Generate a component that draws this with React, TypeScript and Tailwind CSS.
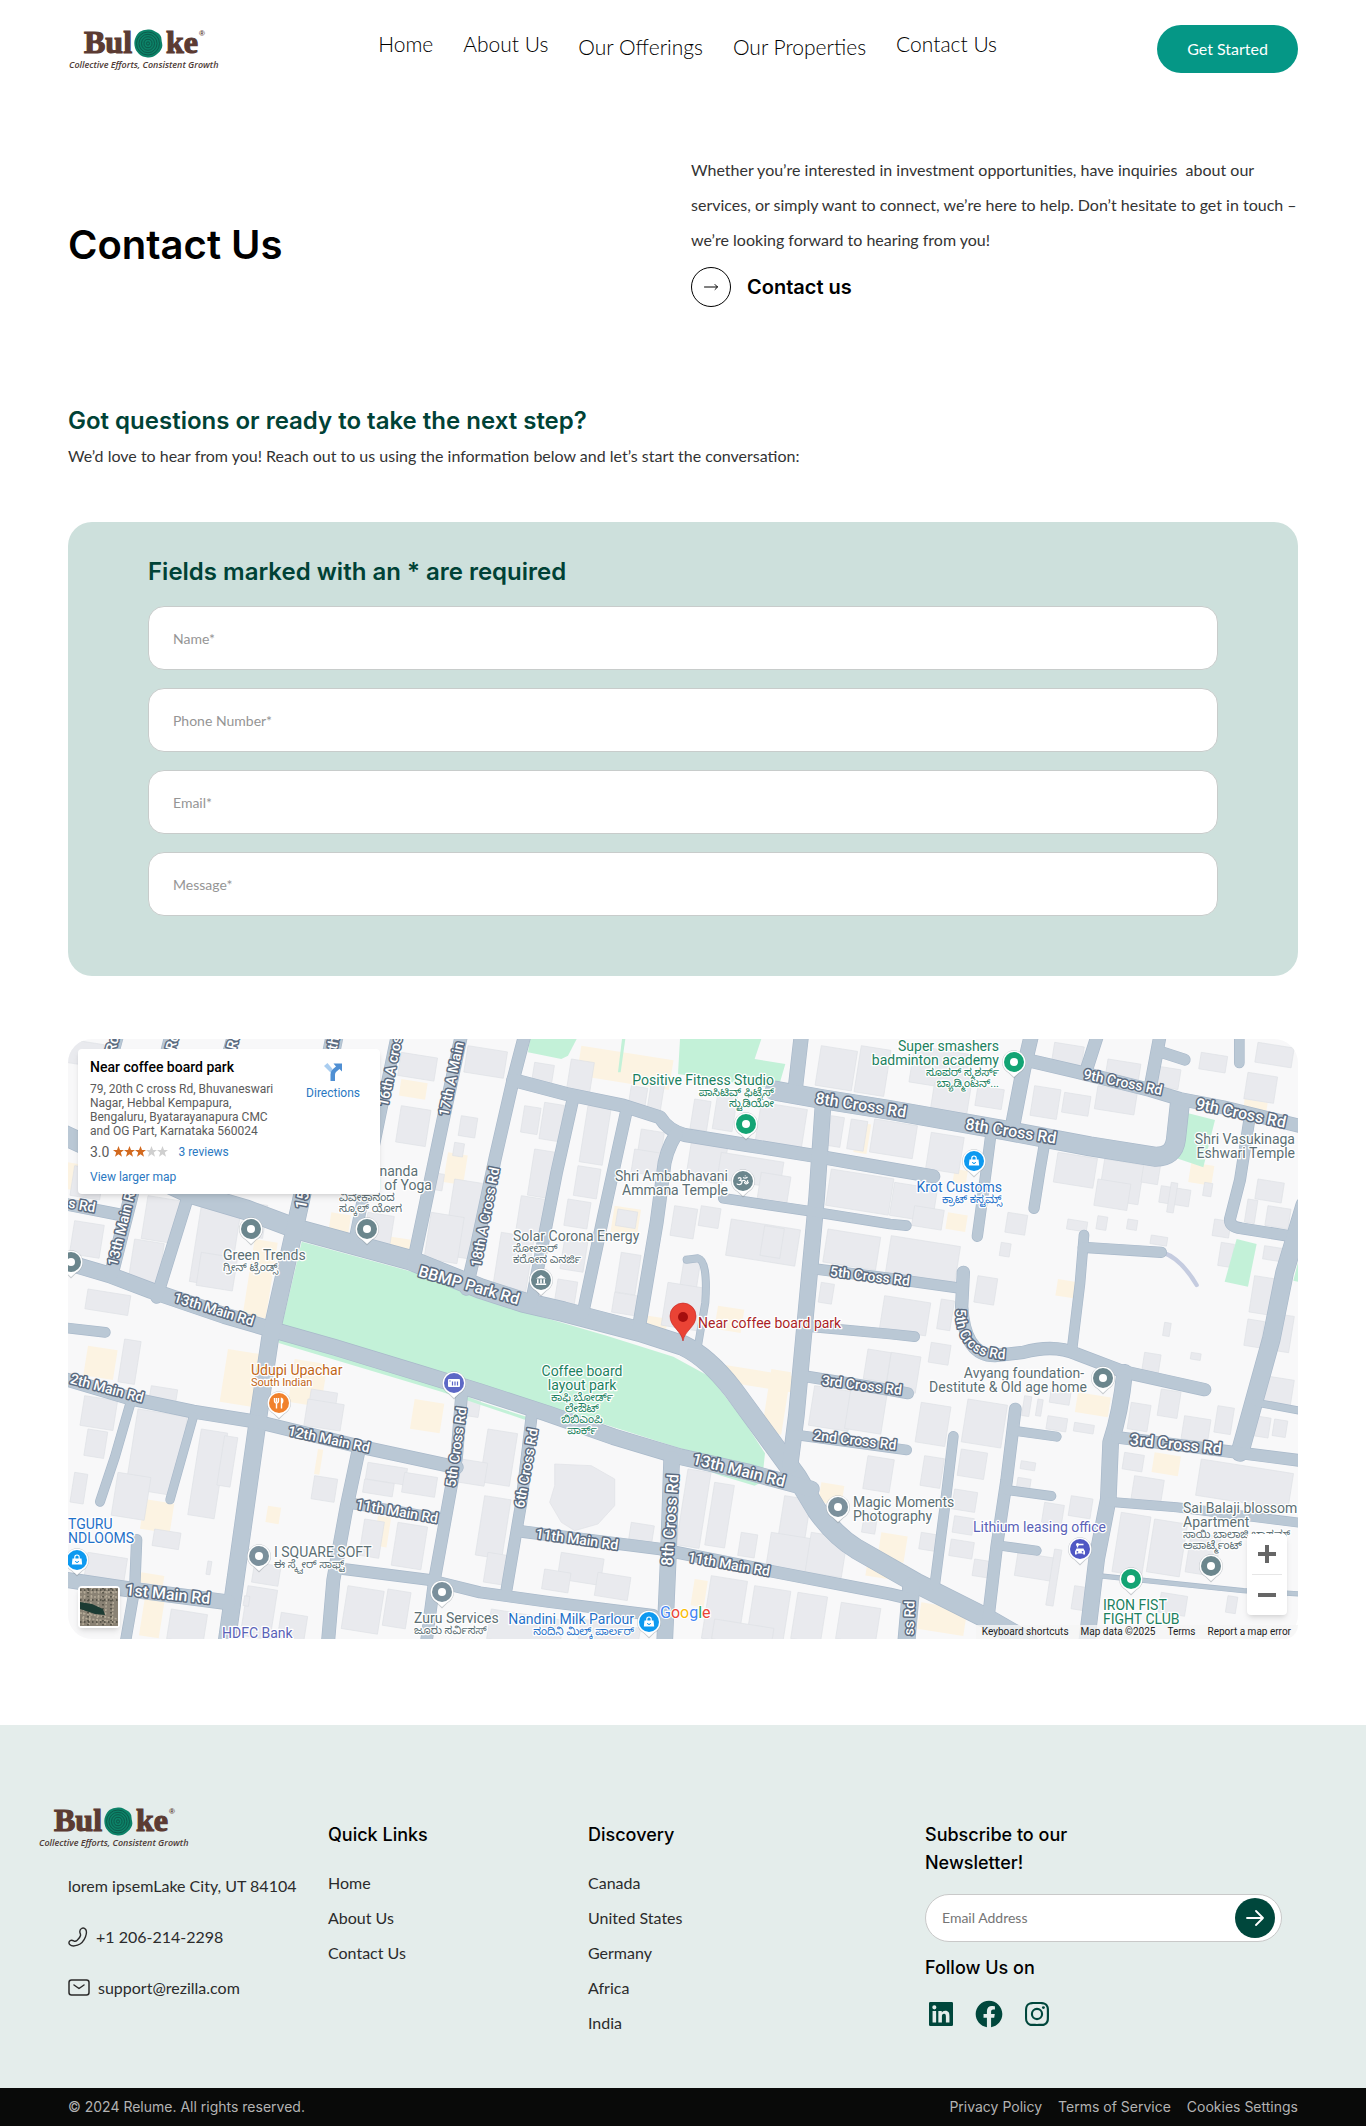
import { BiLogoFacebookCircle, BiLogoInstagram, BiLogoLinkedinSquare } from "react-icons/bi";

const navItems = [
  { label: "Home", menu: false },
  { label: "About Us", menu: false },
  { label: "Our Offerings", menu: true },
  { label: "Our Properties", menu: true },
  { label: "Contact Us", menu: false },
];

const fields = [
  { id: "name", label: "Name*", type: "text" },
  { id: "phone", label: "Phone Number*", type: "tel" },
  { id: "email", label: "Email*", type: "email" },
  { id: "message", label: "Message*", type: "text" },
];

const quickLinks = ["Home", "About Us", "Contact Us"];
const discovery = ["Canada", "United States", "Germany", "Africa", "India"];
const legal = ["Privacy Policy", "Terms of Service", "Cookies Settings"];

function Logo() {
  return (
    <svg className="overflow-visible" width="150" height="44" viewBox="0 0 150 44" role="img" aria-label="Buloke">
      <g fill="#5b3b33" stroke="#5b3b33" fontFamily="'Liberation Serif', serif" fontWeight="700" fontSize="32">
        <text x="16" y="26" strokeWidth="1.200">Bul</text>
        <text x="98" y="26" strokeWidth="1.200">ke</text>
      </g>
      <path d="M80 2.500c4-.5 6 1.500 9 3s4.500 4 4.500 7 1.500 5 .5 8-3 5-5.500 7-5.500 3.500-9 3-6-1-8.500-3.500-4-5-4.500-8.500 0-6 1.500-9 3-4.500 5.500-5.500 4-1.300 6.500-1.500z" fill="#0c8268" />
      <g fill="none" stroke="#0b4a3d" strokeWidth=".7">
        <ellipse cx="80" cy="16.500" rx="11.500" ry="11.500" />
        <ellipse cx="80" cy="16.500" rx="9" ry="9.200" />
        <ellipse cx="80" cy="16.500" rx="6.500" ry="6.800" />
        <ellipse cx="80" cy="16.500" rx="4" ry="4.200" />
        <ellipse cx="80" cy="16.500" rx="1.500" ry="1.700" />
      </g>
      <text x="131" y="9" fill="#5b3b33" fontFamily="'Liberation Sans', sans-serif" fontWeight="700" fontSize="8">®</text>
      <text x="1" y="41" fill="#4d3a36" fontFamily="'Open Sans', sans-serif" fontStyle="italic" fontWeight="600" fontSize="9">
        Collective Efforts, Consistent Growth
      </text>
    </svg>
  );
}

// Road centre lines, three units to one map pixel
const roads: { w: number; d: string }[] = [
  { w: 62, d: "M-30 280L366 463L536 513L696 573L1026 663L1236 748L1366 790L1486 818L1716 878L1846 920Q1920 955 1996 1053L2186 1313L2246 1413Q2300 1490 2366 1530L2546 1633L2746 1733L2880 1810" },
  { w: 50, d: "M-10 668L126 708L250 755L470 830L606 870L800 925L1056 1003L1236 1058L1436 1123L1636 1193L1836 1253L2036 1298L2230 1350" },
  { w: 54, d: "M800 -10L700 480L606 900L570 1140L476 1810" },
  { w: 44, d: "M311 -10L130 705" },
  { w: 38, d: "M496 -10L370 440L266 775" },
  { w: 36, d: "M150 -10L60 320" },
  { w: 36, d: "M986 -10L860 600" },
  { w: 38, d: "M-10 495L160 528" },
  { w: 40, d: "M1180 -10L1126 240L1036 670" },
  { w: 40, d: "M1370 -10L1336 120L1281 360L1226 620L1195 750" },
  { w: 42, d: "M1336 123L1496 165L1666 200L1776 235Q1800 275 1850 288L2036 318L2236 350L2466 390L2596 412" },
  { w: 38, d: "M1516 175L1466 400L1390 790" },
  { w: 38, d: "M1676 213L1606 533L1544 825" },
  { w: 42, d: "M1826 283Q1790 340 1786 400L1766 550L1712 870" },
  { w: 46, d: "M2200 -10L2180 165" },
  { w: 60, d: "M2120 155L2260 180L2466 213L2816 275L3066 322L3260 353Q3318 355 3324 300L3336 190" },
  { w: 50, d: "M2266 185L2246 475L2206 903L2185 1130L2166 1280" },
  { w: 32, d: "M1966 478L2216 515L2466 555L2515 560" },
  { w: 34, d: "M2240 690L2466 718L2680 748" },
  { w: 32, d: "M2216 862L2466 885L2540 893" },
  { w: 24, d: "M1856 662L1890 658Q1920 665 1912 790L1890 920" },
  { w: 46, d: "M2890 -10L2866 93L2832 270" },
  { w: 40, d: "M3088 -10L3056 90" },
  { w: 42, d: "M2876 63L3026 98L3246 153L3336 180L3466 205L3700 262" },
  { w: 40, d: "M3276 -10L3246 150" },
  { w: 36, d: "M3276 38L3350 62" },
  { w: 32, d: "M3514 -10L3514 72" },
  { w: 34, d: "M2770 275L2751 423L2728 592" },
  { w: 34, d: "M2932 300L2916 393L2898 508" },
  { w: 36, d: "M3546 230L3516 423L3486 540Q3484 564 3520 568L3670 592" },
  { w: 56, d: "M3710 500L3650 700L3610 900L3560 1080L3516 1240" },
  { w: 32, d: "M3048 588L3036 733L3011 940" },
  { w: 34, d: "M3046 625L3280 640" },
  { w: 40, d: "M2686 700L2681 803Q2690 950 2780 950L2866 940Q2960 915 3026 945L3166 998L3410 1052" },
  { w: 50, d: "M3170 1000Q3158 1120 3128 1210L3121 1380L3086 1560L3056 1810" },
  { w: 38, d: "M3146 1195L3526 1243L3700 1265" },
  { w: 24, d: "M3560 1090L3700 1116" },
  { w: 30, d: "M3121 1388L3326 1405L3700 1452" },
  { w: 16, d: "M3090 1610L3526 1655L3700 1665" },
  { w: 38, d: "M2842 1110L2816 1323L2786 1523L2761 1735" },
  { w: 30, d: "M2836 1175L2966 1193" },
  { w: 30, d: "M2816 1353L2950 1371" },
  { w: 30, d: "M2796 1520L2906 1535" },
  { w: 32, d: "M2656 1192L2631 1400L2600 1640" },
  { w: 36, d: "M2200 1010L2466 1053L2520 1063" },
  { w: 32, d: "M2186 1188L2516 1233" },
  { w: 54, d: "M2530 1640L2515 1810" },
  { w: 38, d: "M1366 1478L1776 1530L2116 1598L2466 1665L2530 1680" },
  { w: 50, d: "M1811 1260L1801 1553L1790 1810" },
  { w: 36, d: "M1391 1130L1360 1390L1316 1650" },
  { w: 36, d: "M826 1590L1086 1623L1236 1660L1436 1688L1756 1728" },
  { w: 38, d: "M1181 1063L1166 1253L1100 1620L1075 1810" },
  { w: 42, d: "M872 1233L836 1403L796 1623L780 1810" },
  { w: 34, d: "M850 1393L1120 1440" },
  { w: 42, d: "M-10 1020L186 1078L376 1118L576 1150L876 1223L1166 1285" },
  { w: 30, d: "M190 1083L141 1253L96 1388" },
  { w: 28, d: "M376 1133L306 1382" },
  { w: 48, d: "M-10 1622L176 1650L480 1690" },
  { w: 34, d: "M206 1502L200 1650L172 1810" },
  { w: 32, d: "M-10 866L112 880" },
];

// x, y, width, height; every block leans with the street grid
const buildings: number[][] = [
  [0, 0, 110, 70], [20, 380, 90, 90], [20, 545, 90, 100], [240, 470, 110, 130], [200, 600, 90, 130], [400, 500, 120, 230],
  [400, 640, 110, 100], [540, 490, 60, 100], [60, 750, 130, 60], [900, 520, 80, 90], [1000, 40, 110, 70], [1000, 200, 90, 110],
  [1090, 400, 40, 50], [1200, 20, 120, 80], [1180, 230, 50, 60], [1160, 310, 30, 40], [1160, 420, 90, 230], [1090, 520, 100, 140],
  [1400, 70, 60, 70], [1510, 60, 70, 90], [1430, 190, 60, 110], [1400, 330, 70, 140], [1360, 470, 90, 130], [1300, 580, 100, 180],
  [1370, 200, 50, 80], [1560, 200, 70, 170], [1530, 380, 70, 90], [1500, 480, 70, 80], [1490, 600, 70, 90], [1470, 720, 60, 70],
  [1720, 270, 70, 90], [1700, 330, 90, 70], [1650, 510, 60, 50], [1660, 640, 60, 120], [1640, 760, 70, 60], [1690, 140, 50, 70],
  [1750, 130, 40, 80], [1880, 180, 50, 90], [1950, 160, 60, 110], [2080, 190, 140, 120], [1870, 310, 110, 110], [1960, 340, 190, 80],
  [2080, 400, 90, 80], [1820, 500, 70, 90], [1900, 500, 60, 60], [1990, 540, 210, 110], [1850, 650, 50, 160], [1800, 730, 110, 130],
  [2090, 560, 60, 90], [2260, 20, 110, 120], [2380, 20, 90, 140], [2540, 20, 180, 110], [2600, 130, 110, 90], [2290, 230, 40, 90],
  [2350, 240, 50, 90], [2420, 240, 130, 100], [2590, 280, 100, 110], [2290, 390, 190, 110], [2480, 430, 130, 100], [2540, 500, 90, 60],
  [2280, 570, 160, 100], [2470, 590, 210, 120], [2260, 730, 40, 60], [2450, 770, 140, 100], [2620, 780, 40, 90], [2730, 140, 80, 60],
  [2900, 140, 80, 90], [2990, 160, 80, 60], [3090, 140, 120, 70], [2960, 10, 90, 60], [3120, 60, 100, 60], [3260, 80, 80, 60],
  [3400, 40, 80, 50], [3540, 100, 90, 80], [3570, 10, 110, 60], [2970, 340, 120, 90], [3110, 360, 120, 120], [3090, 420, 100, 80],
  [3230, 360, 50, 70], [3280, 440, 90, 50], [3310, 430, 20, 90], [3410, 430, 25, 40], [2820, 520, 60, 60], [3000, 540, 60, 30],
  [3090, 530, 30, 40], [3180, 540, 30, 30], [3250, 588, 50, 26], [2730, 710, 60, 80], [2800, 610, 30, 40], [3570, 420, 80, 60],
  [3540, 480, 30, 70], [3600, 500, 70, 60], [3440, 540, 50, 50], [3460, 610, 40, 70], [3590, 620, 70, 40], [3560, 710, 80, 110],
  [3540, 840, 50, 80], [3600, 820, 80, 110], [3290, 850, 20, 40], [3230, 940, 50, 60], [3370, 940, 30, 20], [3280, 1050, 60, 80],
  [3190, 1090, 60, 80], [3350, 1130, 80, 70], [3450, 1100, 50, 80], [3590, 1010, 90, 80], [3560, 1130, 50, 60], [3620, 1140, 40, 50],
  [3170, 1240, 60, 50], [3200, 1310, 90, 70], [3400, 1260, 280, 110], [3160, 1420, 90, 180], [3260, 1440, 100, 160], [3370, 1480, 90, 120],
  [3280, 1660, 80, 60], [3480, 1670, 30, 50], [2590, 910, 60, 60], [2470, 940, 90, 110], [2560, 1090, 90, 120], [2700, 1080, 120, 130],
  [2680, 1230, 80, 80], [2570, 1250, 60, 90], [2660, 1350, 70, 60], [2660, 1430, 60, 50], [2650, 1500, 70, 50], [2560, 1480, 60, 50],
  [2720, 1560, 60, 50], [2870, 1070, 22, 60], [2910, 1080, 16, 50], [2940, 1130, 60, 40], [3020, 1150, 60, 26], [2860, 1265, 44, 24],
  [2850, 1315, 40, 34], [3010, 1370, 66, 60], [2930, 1390, 60, 60], [2850, 1540, 110, 70], [2960, 1530, 22, 170], [3020, 1640, 40, 70],
  [2950, 1050, 60, 40], [2240, 1040, 120, 120], [2350, 1040, 110, 130], [2400, 930, 70, 90], [2400, 1250, 80, 100], [2390, 1420, 40, 60],
  [1860, 1290, 70, 230], [1940, 1330, 60, 190], [2020, 1480, 50, 70], [2150, 1370, 80, 130], [2110, 1480, 130, 120], [2230, 1480, 110, 120],
  [1690, 1450, 70, 50], [1480, 1540, 130, 80], [1430, 1590, 80, 60], [1590, 1600, 100, 70], [1260, 1170, 90, 160],
  [1250, 1370, 80, 180], [1260, 1540, 60, 90], [1270, 1710, 220, 90], [1540, 1740, 180, 60], [1930, 1610, 110, 190], [2060, 1640, 110, 160],
  [2190, 1660, 90, 140], [2320, 1690, 120, 110], [1940, 1740, 180, 60], [170, 900, 50, 130], [50, 1070, 100, 90], [60, 1170, 60, 80],
  [210, 1110, 150, 240], [150, 1300, 100, 130], [400, 1170, 80, 260], [470, 1190, 40, 150], [250, 1040, 80, 40], [730, 1050, 80, 80],
  [720, 1080, 110, 80], [900, 1270, 120, 50], [890, 1320, 90, 40], [1010, 1300, 100, 60], [740, 1310, 70, 70], [890, 1440, 60, 110],
  [990, 1450, 90, 130], [840, 1640, 110, 130], [960, 1650, 70, 110], [260, 1470, 80, 50], [60, 1540, 120, 70], [420, 1566, 12, 40],
  [560, 1570, 80, 60], [540, 1640, 90, 150], [310, 1710, 110, 90], [640, 1720, 80, 80], [530, 1670, 16, 30], [20, 1300, 40, 90],
  [1200, 1070, 40, 60], [1180, 1260, 80, 70],
];

const shops: number[][] = [
  [560, 600, 70, 230], [790, 520, 60, 70], [950, 590, 80, 60], [1000, 120, 80, 50], [1140, 340, 60, 90], [0, 370, 30, 80],
  [1540, 20, 280, 90], [1640, 500, 80, 80], [2370, 250, 40, 90], [2640, 520, 60, 50], [2660, 390, 40, 50], [3530, 180, 70, 40],
  [3370, 370, 70, 60], [2970, 720, 60, 50], [480, 930, 120, 160], [680, 960, 100, 130], [1040, 1080, 90, 90], [60, 920, 90, 90],
  [600, 1400, 40, 50], [750, 1230, 16, 76], [230, 1380, 90, 90], [220, 1600, 70, 30], [930, 1430, 40, 90], [230, 1680, 60, 110],
  [1920, 970, 260, 50], [2110, 990, 60, 190], [2260, 1330, 70, 60], [2560, 1690, 140, 80], [3260, 1240, 80, 60], [2400, 1560, 120, 50],
  [1740, 830, 60, 50], [1950, 800, 80, 70], [1880, 1620, 40, 80], [2440, 1480, 80, 80], [3030, 1060, 100, 60],
];

type RoadLabel = [text: string, x: number, y: number, angle: number, size: number];
const roadLabels: RoadLabel[] = [
  ["8th Cross Rd", 793, 66, 9, 16],
  ["8th Cross Rd", 943, 92, 9, 16],
  ["9th Cross Rd", 1055, 43, 12, 14],
  ["9th Cross Rd", 1173, 74, 12, 16],
  ["5th Cross Rd", 802, 237, 7, 14],
  ["3rd Cross Rd", 794, 346, 7, 14],
  ["2nd Cross Rd", 787, 401, 7, 14],
  ["3rd Cross Rd", 1108, 405, 6, 16],
  ["13th Main Rd", 671, 431, 14, 16],
  ["13th Main Rd", 146, 270, 17, 14],
  ["12th Main Rd", 261, 400, 12, 14],
  ["2th Main Rd", 39, 349, 15, 14],
  ["1st Main Rd", 100, 555, 6, 16],
  ["11th Main Rd", 329, 472, 10, 14],
  ["11th Main Rd", 509, 500, 8, 14],
  ["11th Main Rd", 661, 525, 10, 14],
  ["BBMP Park Rd", 401, 246, 16, 16],
  ["8th Cross Rd", 602, 481, -86, 16],
  ["6th Cross Rd", 458, 429, -80, 14],
  ["5th Cross Rd", 388, 408, -82, 14],
  ["18th A Cross Rd", 417, 178, -79, 14],
  ["17th A Main", 383, 40, -78, 14],
  ["16th A cros", 322, 32, -78, 14],
  ["15", 234, 161, -79, 16],
  ["13th Main R", 53, 190, -76, 14],
  ["s Rd", 14, 166, 10, 14],
  ["ss Rd", 841, 579, -88, 14],
  ["Rd", 44, 5, -75, 14],
  ["Rd", 104, 3, -75, 14],
  ["Rd", 165, 2, -75, 14],
  ["th", 265, 4, -78, 14],
];

type Place = {
  x: number;
  y: number;
  color: string;
  anchor?: "start" | "middle" | "end";
  lines: string[];
  local?: string[];
};

const slate = "#5c6f74";
const green = "#1b8160";
const blue = "#1f71c9";
const places: Place[] = [
  { x: 155, y: 221, color: slate, lines: ["Green Trends"], local: ["ಗ್ರೀನ್ ಟ್ರೆಂಡ್ಸ್"] },
  { x: 350, y: 137, color: slate, anchor: "end", lines: ["nanda"] },
  { x: 364, y: 151, color: slate, anchor: "end", lines: ["l of Yoga"] },
  { x: 271, y: 150, color: slate, lines: [], local: ["ವಿವೇಕಾನಂದ", "ಸ್ಕೂಲ್ ಯೋಗ"] },
  { x: 706, y: 46, color: green, anchor: "end", lines: ["Positive Fitness Studio"], local: ["ಪಾಸಿಟಿವ್ ಫಿಟ್ನೆಸ್", "ಸ್ಟುಡಿಯೋ"] },
  { x: 660, y: 142, color: slate, anchor: "end", lines: ["Shri Ambabhavani", "Ammana Temple"] },
  { x: 445, y: 202, color: slate, lines: ["Solar Corona Energy"], local: ["ಸೋಲಾರ್", "ಕರೋನ ಎನರ್ಜಿ"] },
  { x: 630, y: 289, color: "#ab1f27", lines: ["Near coffee board park"] },
  { x: 931, y: 12, color: green, anchor: "end", lines: ["Super smashers", "badminton academy"], local: ["ಸೂಪರ್ ಸ್ಮಶರ್ಸ್", "ಬ್ಯಾಡ್ಮಿಂಟನ್..."] },
  { x: 934, y: 153, color: blue, anchor: "end", lines: ["Krot Customs"], local: ["ಕ್ರಾಟ್ ಕಸ್ಟಮ್ಸ್"] },
  { x: 1227, y: 105, color: slate, anchor: "end", lines: ["Shri Vasukinaga", "Eshwari Temple"] },
  { x: 183, y: 336, color: "#bf6516", lines: ["Udupi Upachar"], local: ["South Indian"] },
  { x: 0, y: 490, color: blue, lines: ["TGURU", "NDLOOMS"] },
  { x: 206, y: 518, color: slate, lines: ["I SQUARE SOFT"], local: ["ಈ ಸ್ಕ್ವೇರ್ ಸಾಫ್ಟ್"] },
  { x: 346, y: 584, color: slate, lines: ["Zuru Services"], local: ["ಜೂರು ಸರ್ವಿಸಸ್"] },
  { x: 154, y: 599, color: "#5a62b8", lines: ["HDFC Bank"] },
  { x: 514, y: 337, color: green, anchor: "middle", lines: ["Coffee board", "layout park"], local: ["ಕಾಫಿ ಬೋರ್ಡ್", "ಲೇಔಟ್", "ಬಿಬಿಎಂಪಿ", "ಪಾರ್ಕ್"] },
  { x: 566, y: 585, color: blue, anchor: "end", lines: ["Nandini Milk Parlour"], local: ["ನಂದಿನಿ ಮಿಲ್ಕ್ ಪಾರ್ಲರ್"] },
  { x: 785, y: 468, color: slate, lines: ["Magic Moments", "Photography"] },
  { x: 1016, y: 339, color: slate, anchor: "end", lines: ["Avyang foundation-"] },
  { x: 1019, y: 353, color: slate, anchor: "end", lines: ["Destitute & Old age home"] },
  { x: 905, y: 493, color: "#5a62b8", lines: ["Lithium leasing office"] },
  { x: 1035, y: 571, color: green, lines: ["IRON FIST", "FIGHT CLUB"] },
  { x: 1115, y: 474, color: slate, lines: ["Sai Balaji blossom", "Apartment"], local: ["ಸಾಯಿ ಬಾಲಾಜಿ ಬ್ಲಾಸಮ್", "ಅಪಾರ್ಟ್ಮೆಂಟ್"] },
];

type PinKind = "dot" | "bag" | "food" | "museum" | "atm" | "car" | "om";
const pins: { x: number; y: number; fill: string; kind: PinKind }[] = [
  { x: 183, y: 190, fill: "#6b868d", kind: "dot" },
  { x: 299, y: 190, fill: "#6b868d", kind: "dot" },
  { x: 3, y: 223, fill: "#6b868d", kind: "dot" },
  { x: 678, y: 85, fill: "#13a474", kind: "dot" },
  { x: 675, y: 142, fill: "#6b868d", kind: "om" },
  { x: 473, y: 241, fill: "#6b868d", kind: "museum" },
  { x: 946, y: 23, fill: "#13a474", kind: "dot" },
  { x: 906, y: 122, fill: "#0d99f0", kind: "bag" },
  { x: 211, y: 364, fill: "#f1812c", kind: "food" },
  { x: 386, y: 344, fill: "#5d68c6", kind: "atm" },
  { x: 9, y: 521, fill: "#0d99f0", kind: "bag" },
  { x: 191, y: 517, fill: "#7b909c", kind: "dot" },
  { x: 374, y: 553, fill: "#7b909c", kind: "dot" },
  { x: 581, y: 583, fill: "#0d99f0", kind: "bag" },
  { x: 770, y: 468, fill: "#7b909c", kind: "dot" },
  { x: 1035, y: 339, fill: "#6b868d", kind: "dot" },
  { x: 1012, y: 510, fill: "#4f57c4", kind: "car" },
  { x: 1063, y: 540, fill: "#13a474", kind: "dot" },
  { x: 1143, y: 527, fill: "#6b868d", kind: "dot" },
];

function PinGlyph({ kind }: { kind: PinKind }) {
  switch (kind) {
    case "bag":
      return (
        <>
          <path d="M-4.500-1.500h9l.7 6h-10.400z" fill="#fff" />
          <path d="M-2.200-1v-1.800a2.200 2.200 0 0 1 4.400 0v1.800" fill="none" stroke="#fff" strokeWidth="1.200" />
          <path d="M-1.500 1a1.500 1.500 0 0 0 3 0" fill="none" stroke="#0d99f0" />
        </>
      );
    case "food":
      return (
        <path d="M-2.500 5.500v-6M-4.500-5v3a2 2 0 0 0 4 0v-3M-2.500-5v4M2.500 5.500v-10c2 .5 1.500 4.500 0 5" fill="none" stroke="#fff" strokeWidth="1.400" />
      );
    case "museum":
      return <path d="M-5-1.500l5-3.500 5 3.500zM-4-.8h1.600v4h-1.600zM-.8-.8h1.600v4h-1.600zM2.400-.8h1.600v4h-1.600zM-5.200 3.500h10.400v1.500h-10.400z" fill="#fff" />;
    case "atm":
      return (
        <>
          <rect x="-6" y="-4" width="12" height="8" rx="1" fill="#fff" />
          <path d="M-4-1.500v-1M-1.500 2.500v-4M1 2.500v-4M3.500 2.500v-4" stroke="#5d68c6" strokeWidth="1.200" />
        </>
      );
    case "car":
      return (
        <>
          <path d="M-5 5.500v-3l1.500-3h7l1.500 3v3h-1.700v-1h-6.600v1z" fill="#fff" />
          <circle cx="-2.600" cy="2.800" r=".9" fill="#4f57c4" />
          <circle cx="2.600" cy="2.800" r=".9" fill="#4f57c4" />
          <path d="M-2.500-4.500v3M-2.500-4.500h6" stroke="#fff" strokeWidth="1.300" />
          <circle cx="-2.500" cy="-4.500" r="1.500" fill="#fff" />
        </>
      );
    case "om":
      return (
        <path d="M-5-2.500c2-2 4.500 0 2 2 3.500 0 2 4.500-1.500 4-1 0-1.500-.5-1.500-1M-1.500.5c2-1.500 3-1.500 4 0s3 .5 2-1.500M1.500 1c0 2.500 3.500 2.500 4 0M0-3.500c1.500 1 3 1 4.500-.5M2.300-5.500v.8" fill="none" stroke="#fff" strokeWidth="1.200" />
      );
    default:
      return <circle r="4" fill="#fff" />;
  }
}

function MapCanvas() {
  return (
    <svg
      className="block h-full w-full"
      viewBox="0 0 1230 600"
      preserveAspectRatio="xMidYMid slice"
      fontFamily="Roboto, 'Noto Sans', 'Noto Sans Kannada', sans-serif"
    >
      <rect width="1230" height="600" fill="#f8f8f9" />
      <g transform="scale(.33333)">
        <g fill="#fcf3e2">
          {shops.map(([x, y, w, h]) => (
            <rect key={`${x}-${y}`} x={x} y={y} width={w} height={h} transform={`rotate(9 ${x} ${y})`} />
          ))}
        </g>
        <g fill="#e9eaee" stroke="#dfe1e6" strokeWidth="2">
          {buildings.map(([x, y, w, h]) => (
            <rect key={`${x}-${y}`} x={x} y={y} width={w} height={h} transform={`rotate(9 ${x} ${y})`} />
          ))}
          <path d="M1460 1275L1570 1280L1640 1320V1400L1590 1455L1520 1475L1480 1450L1445 1390L1460 1340Z" />
        </g>
        <g fill="#c3f1d8">
          <path d="M701 608L1086 713L1236 780L1616 890L1816 953L1926 1013L2026 1143L2091 1243L2086 1290L1836 1228L1616 1158L1236 1043L1076 995L826 930L642 858Z" />
          <path d="M1386 0H1526L1500 50L1480 60L1380 40Z" />
          <path d="M1836 0H2080L2060 60L2152 75L2130 150L1830 105Z" />
          <path d="M1662 0h10l-14 100h-8z" />
          <path d="M3361 223L3441 243L3406 385L3326 358Z" />
          <path d="M3506 600L3566 615L3540 743L3470 728Z" />
          <path d="M3690 670V728L3676 725Z" />
          <path d="M632 900L1140 1050L1240 1090L1380 1135L1370 1142L1120 1058L632 912Z" />
          <path d="M1860 1275L2080 1330L2060 1340L1960 1310Z" />
        </g>
        <path d="M3286 641Q3340 660 3386 738" fill="none" stroke="#c5cce0" strokeWidth="13" strokeLinecap="round" />
        <g fill="none" stroke="#a9b9ca" strokeLinejoin="round" strokeLinecap="round">
          {roads.map((r) => (
            <path key={r.d} d={r.d} strokeWidth={r.w} />
          ))}
        </g>
        <g fill="none" stroke="#bac8d5" strokeLinejoin="round" strokeLinecap="round">
          {roads.map((r) => (
            <path key={r.d} d={r.d} strokeWidth={r.w - 4} />
          ))}
        </g>
      </g>

      <g fill="#fff" stroke="#5b6b80" strokeWidth="3" strokeLinejoin="round" fontWeight="500" className="[paint-order:stroke]">
        {roadLabels.map(([text, x, y, angle, size]) => (
          <text
            key={`${x}-${y}`}
            x={x}
            y={y}
            fontSize={size}
            textAnchor="middle"
            dominantBaseline="central"
            transform={`rotate(${angle} ${x} ${y})`}
          >
            {text}
          </text>
        ))}
        <path id="bend" d="M888 270Q886 324 950 320" fill="none" stroke="none" />
        <text fontSize="14">
          <textPath href="#bend">5th Cross Rd</textPath>
        </text>
      </g>

      {pins.map((p) => (
        <g key={`${p.x}-${p.y}`} transform={`translate(${p.x} ${p.y})`}>
          <path d="M0 16.500L-5.500 11A12 12 0 1 1 5.500 11Z" fill="#8b959c" opacity=".45" />
          <path d="M0 15L-5 10.500A11.500 11.500 0 1 1 5 10.500Z" fill="#fff" />
          <circle r="10" fill={p.fill} />
          <PinGlyph kind={p.kind} />
        </g>
      ))}

      <path d="M615 302C613 291 602 288 602 277A13 13 0 0 1 628 277C628 288 617 291 615 302Z" fill="#ea4335" stroke="#c5221f" strokeWidth=".6" />
      <circle cx="615" cy="278" r="5" fill="#a50e0e" />

      {places.map((p) => (
        <g
          key={`${p.x}-${p.y}`}
          fill={p.color}
          stroke="#fff"
          strokeWidth="2.500"
          strokeLinejoin="round"
          textAnchor={p.anchor ?? "start"}
          className="[paint-order:stroke]"
        >
          {p.lines.map((line, i) => (
            <text key={line} x={p.x} y={p.y + i * 14} fontSize="14">
              {line}
            </text>
          ))}
          {p.local?.map((line, i) => (
            <text key={line} x={p.x} y={p.y + (p.lines.length - 1) * 14 + 11 * (i + 1) + (p.lines.length ? 0 : 15)} fontSize="11">
              {line}
            </text>
          ))}
        </g>
      ))}
    </svg>
  );
}

function PlaceCard() {
  return (
    <div className="absolute top-2.5 left-2.5 flex h-[145px] w-[302px] justify-between rounded-sm bg-white py-2 pr-5 pl-3 text-xs leading-[14px] text-[#5b5b5b] shadow-md">
      <div className="w-[190px]">
        <h3 className="text-sm leading-5 font-medium text-black">Near coffee board park</h3>
        <p className="mt-[5px]">
          79, 20th C cross Rd, Bhuvaneswari
          <br />
          Nagar, Hebbal Kempapura,
          <br />
          Bengaluru, Byatarayanapura CMC
          <br />
          and OG Part, Karnataka 560024
        </p>
        <div className="mt-1 flex items-center leading-5">
          <span className="mr-1 text-sm">3.0</span>
          <svg width="55" height="12" viewBox="0 0 55 12" role="img" aria-label="3 of 5 stars">
            {[0, 1, 2, 3, 4].map((i) => (
              <path
                key={i}
                d="M5.500 0l1.500 4h4l-3.200 2.500 1.200 4.200-3.500-2.500-3.500 2.500 1.200-4.200-3.200-2.500h4z"
                transform={`translate(${i * 11} 0)`}
                fill={i < 3 ? "#d2691e" : "#cfcfcf"}
              />
            ))}
          </svg>
          <a href="#reviews" className="ml-2.5 text-[#2a78c2]">3 reviews</a>
        </div>
        <a href="#larger-map" className="mt-2 block text-[#2a78c2]">View larger map</a>
      </div>
      <a href="#directions" className="flex flex-col items-center pt-1.5 text-[#2a78c2]">
        <svg width="18" height="18" viewBox="0 0 18 18" aria-hidden="true">
          <path d="M0 3L3.500 0L8.500 6L7 10Z" fill="#a9cdf0" />
          <path d="M6.500 18V11Q6.500 8 9 6L12 3.500L9.500 .5H18V8.500L15.500 6L12 9Q11 10 11 12V18Z" fill="#4f8fd3" />
        </svg>
        <span className="mt-[5px]">Directions</span>
      </a>
    </div>
  );
}

function LocationMap() {
  return (
    <section aria-label="Map" className="relative mt-[63px] h-[600px] font-['Roboto',sans-serif]">
      <div className="h-full overflow-hidden rounded-3xl">
        <MapCanvas />
      </div>
      <PlaceCard />

      <button type="button" aria-label="Show satellite imagery" className="absolute bottom-[11px] left-2.5 size-[42px] rounded-sm border-2 border-white shadow-md">
        <svg className="block size-full" viewBox="0 0 38 38" aria-hidden="true">
          <rect width="38" height="38" fill="#8a8274" />
          <path d="M0 4h38M0 9h38M2 30l34 4M0 25l38 6M5 0l-2 38M12 0l-3 38M19 0l-2 38M27 0l-2 38M34 0l-2 38" stroke="#b5ab98" strokeWidth="1.500" strokeDasharray="2 1.500" />
          <path d="M0 2h38M0 12h38M0 34h38M8 0v38M23 0v38M31 0v38" stroke="#4a483e" strokeWidth="1.500" strokeDasharray="1.500 2.500" />
          <path d="M0 14l12 2 11 5 2 6-10-1-15-5z" fill="#1c3b33" />
        </svg>
      </button>

      <p aria-label="Google" className="absolute bottom-3.5 left-[592px] flex text-base leading-6 [paint-order:stroke] [-webkit-text-stroke:2px_white]">
        <span className="text-[#4285f4]">G</span>
        <span className="text-[#ea4335]">o</span>
        <span className="text-[#fbbc04]">o</span>
        <span className="text-[#4285f4]">g</span>
        <span className="text-[#34a853]">l</span>
        <span className="text-[#ea4335]">e</span>
      </p>

      <div className="absolute right-[11px] bottom-6 flex w-10 flex-col items-center rounded-sm bg-white shadow-md">
        <button type="button" aria-label="Zoom in" className="flex h-10 w-full items-center justify-center">
          <svg width="18" height="18" viewBox="0 0 18 18" aria-hidden="true">
            <path d="M7 0h4v7h7v4h-7v7h-4v-7h-7v-4h7z" fill="#666" />
          </svg>
        </button>
        <span className="h-px w-[30px] bg-[#e6e6e6]" />
        <button type="button" aria-label="Zoom out" className="flex h-10 w-full items-center justify-center">
          <svg width="18" height="4" viewBox="0 0 18 4" aria-hidden="true">
            <path d="M0 0h18v4h-18z" fill="#666" />
          </svg>
        </button>
      </div>

      <div className="absolute right-0 bottom-0 flex gap-3 rounded-br-3xl bg-[#f5f5f5]/80 pr-[7px] pl-1.5 text-[10px] leading-[14px] text-[#222]">
        <button type="button">Keyboard shortcuts</button>
        <span>Map data ©2025</span>
        <a href="#map-terms">Terms</a>
        <a href="#map-error">Report a map error</a>
      </div>
    </section>
  );
}

function Header() {
  return (
    <header className="flex items-center justify-between px-17 py-[25px]">
      <a href="#home">
        <Logo />
      </a>
      <nav className="flex items-start gap-[30px] pb-2 font-['Lato',sans-serif] text-[21px] leading-6 font-light text-black">
        {navItems.map((item) => (
          <a key={item.label} href="#" className={item.menu ? "pt-[3px]" : ""}>
            {item.label}
          </a>
        ))}
      </nav>
      <button type="button" className="h-12 rounded-full bg-[#059786] px-[30px] text-white">
        Get Started
      </button>
    </header>
  );
}

function Footer() {
  return (
    <footer className="mt-[86px]">
      <div className="grid grid-cols-[260fr_260fr_337fr_373fr] bg-[#e4edeb] px-17 pt-24 pb-12 text-[#2b2b2b]">
        <div>
          <a href="#home" className="-mt-4 -ml-[30px] block w-[150px]">
            <Logo />
          </a>
          <p className="mt-[25px] leading-6">lorem ipsemLake City, UT 84104</p>
          <a href="tel:+12062142298" className="mt-[27px] flex items-center gap-2 leading-6">
            <svg width="20" height="20" viewBox="0 0 20 20" fill="none" stroke="#2b2b2b" strokeWidth="1.400" strokeLinejoin="round" aria-hidden="true">
              <path d="M13.500 1.500c1.200-.8 3-.6 4.200 1 1 1.500 1 4-.2 7.200-1.500 4-4.500 7.300-8 8.500-3 1-6.300.8-7.800-.7-1.200-1.200-.9-2.700.3-3.700 1.300-1.100 2.400-.7 3.700.1 1.200.7 2.100.7 3.500-.6 1.800-1.700 3-3.300 3.300-4.800.3-1.200-.4-1.900-.6-3.200-.3-1.700.3-3 1.600-3.800z" />
            </svg>
            +1 206-214-2298
          </a>
          <a href="mailto:support@rezilla.com" className="mt-[27px] flex items-center gap-2 leading-6">
            <svg width="22" height="18" viewBox="0 0 22 18" fill="none" stroke="#2b2b2b" strokeWidth="1.500" strokeLinecap="round" strokeLinejoin="round" aria-hidden="true">
              <rect x="1" y="1" width="20" height="15" rx="2.500" />
              <path d="M6 6l5 3.500 5-3.500" />
            </svg>
            support@rezilla.com
          </a>
        </div>

        <div>
          <h2 className="font-['Inter',sans-serif] text-lg leading-7 font-medium text-black">Quick Links</h2>
          <ul className="mt-4 leading-[35px]">
            {quickLinks.map((link) => (
              <li key={link}>
                <a href="#">{link}</a>
              </li>
            ))}
          </ul>
        </div>

        <div>
          <h2 className="font-['Inter',sans-serif] text-lg leading-7 font-medium text-black">Discovery</h2>
          <ul className="mt-4 leading-[35px]">
            {discovery.map((link) => (
              <li key={link}>
                <a href="#">{link}</a>
              </li>
            ))}
          </ul>
        </div>

        <div>
          <h2 className="font-['Inter',sans-serif] text-lg leading-7 font-medium text-black">
            Subscribe to our
            <br />
            Newsletter!
          </h2>
          <form className="mt-[17px] mr-4 flex h-12 items-center rounded-full border border-[#c9c9c9] bg-white pr-1.5 pl-4">
            <input
              type="email"
              aria-label="Email Address"
              placeholder="Email Address"
              className="min-w-0 flex-1 text-sm outline-none placeholder:text-[#757575]"
            />
            <button type="button" aria-label="Subscribe" className="flex size-10 items-center justify-center rounded-full bg-[#00473c]">
              <svg width="18" height="16" viewBox="0 0 18 16" fill="none" stroke="#fff" strokeWidth="1.800" strokeLinecap="round" strokeLinejoin="round" aria-hidden="true">
                <path d="M1 8h16M10 1l7 7-7 7" />
              </svg>
            </button>
          </form>
          <h2 className="mt-3 font-['Inter',sans-serif] text-lg leading-7 font-medium text-black">Follow Us on</h2>
          <div className="mt-4 flex gap-4 text-[32px] text-[#00473c]">
            <a href="#linkedin" aria-label="LinkedIn">
              <BiLogoLinkedinSquare />
            </a>
            <a href="#facebook" aria-label="Facebook">
              <BiLogoFacebookCircle />
            </a>
            <a href="#instagram" aria-label="Instagram">
              <BiLogoInstagram />
            </a>
          </div>
        </div>
      </div>

      <div className="flex justify-between bg-[#090a09] px-17 font-['Inter',sans-serif] text-sm leading-[38px] text-[#b3b3b3]">
        <p>© 2024 Relume. All rights reserved.</p>
        <div className="flex gap-4">
          {legal.map((item) => (
            <a key={item} href="#">
              {item}
            </a>
          ))}
        </div>
      </div>
    </footer>
  );
}

export default function App() {
  return (
    <div className="bg-white font-['Lato',sans-serif] text-base text-[#333]">
      <Header />

      <main className="px-17">
        <section className="grid grid-cols-2 items-center gap-4 pt-[54px]">
          <h1 className="pt-[30px] font-['Inter',sans-serif] text-[40px] leading-12 font-semibold text-black">Contact Us</h1>
          <div>
            <p className="leading-[35px] whitespace-pre-line">
              {"Whether you’re interested in investment opportunities, have inquiries\u00a0 about our\nservices, or simply want to connect, we’re here to help. Don’t hesitate to get in touch –\nwe’re looking forward to hearing from you!"}
            </p>
            <a href="#contact" className="mt-2.5 flex items-center gap-4 font-['Inter',sans-serif] text-xl font-semibold text-black">
              <span className="flex size-10 items-center justify-center rounded-full border border-black">
                <svg width="14" height="8" viewBox="0 0 14 8" fill="none" stroke="#000" strokeLinecap="round" aria-hidden="true">
                  <path d="M.5 4h13M11 1.500L13.500 4 11 6.500" />
                </svg>
              </span>
              Contact us
            </a>
          </div>
        </section>

        <section id="contact" className="mt-[98px]">
          <h2 className="font-['Inter',sans-serif] text-2xl leading-8 font-semibold text-[#004236]">
            Got questions or ready to take the next step?
          </h2>
          <p className="mt-[7px] leading-6">
            We’d love to hear from you! Reach out to us using the information below and let’s start the conversation:
          </p>

          <form className="mt-[54px] rounded-3xl bg-[#cde0dc] px-20 pt-[34px] pb-15">
            <h2 className="font-['Inter',sans-serif] text-2xl leading-8 font-semibold text-[#004236]">
              Fields marked with an * are required
            </h2>
            <div className="mt-[18px] flex flex-col gap-[18px]">
              {fields.map((field) => (
                <input
                  key={field.id}
                  id={field.id}
                  type={field.type}
                  aria-label={field.label}
                  placeholder={field.label}
                  className="h-16 w-full rounded-2xl border border-[#c8cccb] bg-white px-6 text-sm outline-none placeholder:text-[#959595]"
                />
              ))}
            </div>
          </form>
        </section>

        <LocationMap />
      </main>

      <Footer />
    </div>
  );
}
